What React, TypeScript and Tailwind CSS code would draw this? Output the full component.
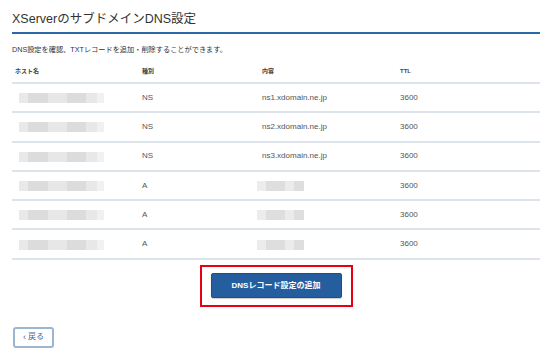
import React from "react";

const jp = { fontFamily: '"Liberation Sans", "Noto Sans CJK JP", sans-serif' };

type Seg = [number, string];
const hostSegs: Seg[] = [
  [9, "#e9e9e9"],
  [20, "#dcdcdc"],
  [19, "#e7e7e7"],
  [19, "#dcdcdc"],
  [11, "#e8e8e8"],
  [7, "#f1f1f1"],
];
const ipSegs: Seg[] = [
  [9, "#ececec"],
  [19, "#dedede"],
  [9, "#ebebeb"],
  [10, "#dedede"],
];

function Blur({ segs }: { segs: Seg[] }) {
  return (
    <div className="flex h-[10px]">
      {segs.map(([w, c], i) => (
        <div key={i} style={{ width: w, background: c }} />
      ))}
    </div>
  );
}

const rows = [
  { type: "NS", content: "ns1.xdomain.ne.jp" },
  { type: "NS", content: "ns2.xdomain.ne.jp" },
  { type: "NS", content: "ns3.xdomain.ne.jp" },
  { type: "A", content: null },
  { type: "A", content: null },
  { type: "A", content: null },
];

export default function App() {
  return (
    <div className="w-[550px] h-[360px] bg-white text-[#333]" style={jp}>
      <div className="ml-[12px] w-[528px] pt-[10px]">
        <h1 className="text-[12.5px] leading-[18px] text-[#333] border-b-2 border-[#2b68a6] h-[24px]">
          XServerのサブドメインDNS設定
        </h1>
        <p className="text-[7.2px] leading-[10px] mt-[11px] text-[#333]">
          DNS設定を確認、TXTレコードを追加・削除することができます。
        </p>
        <div className="mt-[6px]">
          <div className="grid grid-cols-[130px_120px_138px_1fr] h-[23px] items-center border-b-2 border-[#dde3eb] text-[6px] font-bold text-[#444]">
            <div className="pl-[3px]">ホスト名</div>
            <div>種別</div>
            <div>内容</div>
            <div>TTL</div>
          </div>
          {rows.map((r, i) => (
            <div
              key={i}
              className="grid grid-cols-[130px_120px_138px_1fr] h-[29.3px] items-center border-b-2 border-[#dde3eb] text-[8px] text-[#555]"
            >
              <div className="pl-[7px] pt-[1px]">
                <Blur segs={hostSegs} />
              </div>
              <div>{r.type}</div>
              <div>
                {r.content ? (
                  r.content
                ) : (
                  <div className="-ml-[5px] pt-[1px]">
                    <Blur segs={ipSegs} />
                  </div>
                )}
              </div>
              <div>3600</div>
            </div>
          ))}
        </div>
        <div className="flex justify-center mt-[5px]">
          <div className="border-2 border-[#e60012] w-[153px] h-[42px] flex items-center justify-center">
            <button className="w-[131px] h-[25px] bg-[#255e9f] border border-[#1d4f88] rounded-[2px] text-white text-[8px] font-bold shadow-[0_1px_1px_rgba(0,0,0,0.2)]">
              DNSレコード設定の追加
            </button>
          </div>
        </div>
        <div className="mt-[20px] pl-px">
          <button className="w-[41px] h-[21px] border-2 border-[#9ab6d3] rounded-[3px] bg-white text-[#3a6ba3] text-[8px] flex items-center justify-center gap-[2px]">
            <span className="text-[9px] leading-none">‹</span>
            <span>戻る</span>
          </button>
        </div>
      </div>
    </div>
  );
}
